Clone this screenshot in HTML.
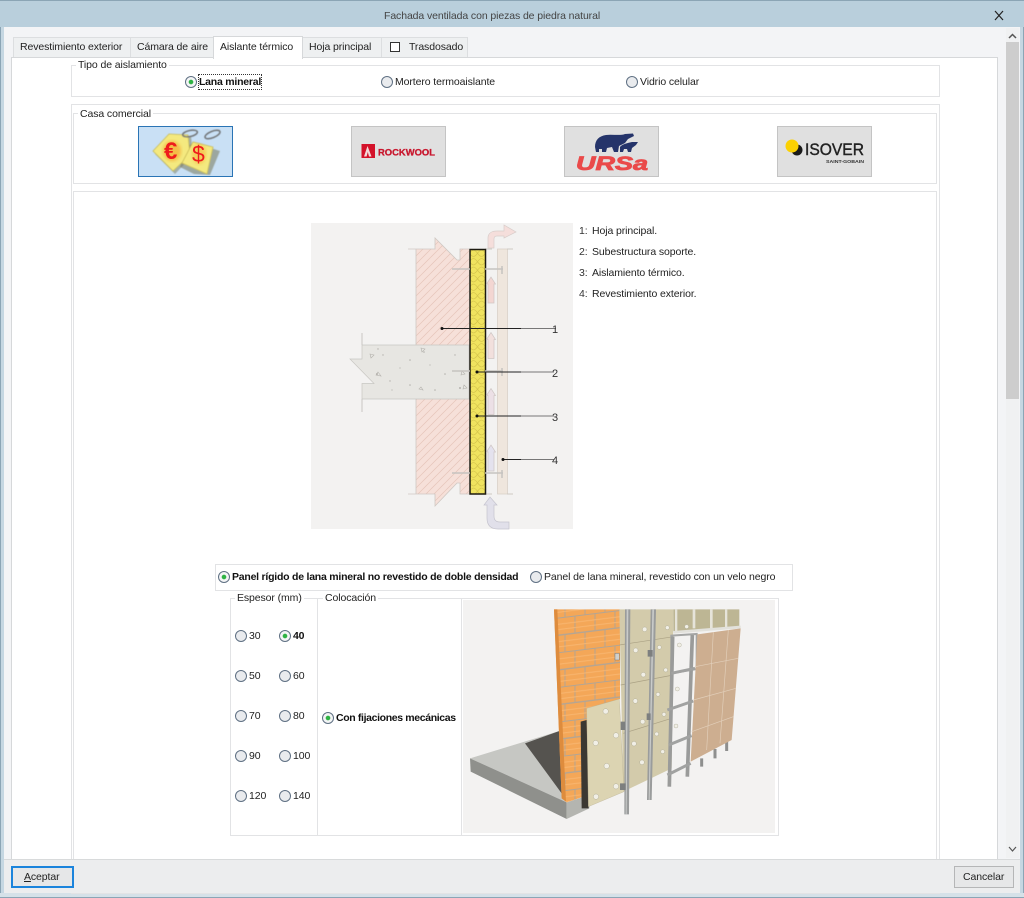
<!DOCTYPE html>
<html lang="es"><head><meta charset="utf-8"><title>Fachada ventilada con piezas de piedra natural</title>
<style>
html,body{margin:0;padding:0;background:#fff}
#w{position:relative;width:1024px;height:898px;overflow:hidden;background:#f3f4f6;font:10.5px "Liberation Sans",Arial,sans-serif;letter-spacing:-.1px;color:#222}
.a{position:absolute;box-sizing:border-box}
.t{position:absolute;white-space:nowrap;line-height:14px;height:14px}
.b{font-weight:bold;color:#111;letter-spacing:-.23px}
.g{position:absolute;box-sizing:border-box;border:1px solid #e2e3e5;background:#fff}
.r{position:absolute;box-sizing:border-box;width:12px;height:12px;border-radius:50%;border:1px solid #5f7083;background:#e9ebee}
.r.on{background:radial-gradient(circle,#2fb344 0 2px,#f4f5f6 2.6px)}
.tab{position:absolute;box-sizing:border-box;background:#eef0f1;border:1px solid #dcdee0;border-bottom:0}
svg{position:absolute;left:0;top:0}
</style></head><body><div id="w">
<div class="a" style="left:0;top:0;width:1024px;height:27px;background:#b9cfdc;border-top:1px solid #8ba5b5"></div>
<div class="a" style="left:0;top:27px;width:4px;height:871px;background:#c5d7e2;border-left:1px solid #8ba5b5"></div>
<div class="a" style="left:1020px;top:27px;width:4px;height:871px;background:#c5d7e2;border-right:1px solid #8ba5b5"></div>
<div class="a" style="left:0;top:893px;width:1024px;height:5px;background:#d5e1e8;border-bottom:1px solid #8ba5b5"></div>
<div class="t" style="left:384px;top:9px;color:#444">Fachada ventilada con piezas de piedra natural</div>

<div class="tab" style="left:13px;top:37px;width:118px;height:21px"></div>
<div class="tab" style="left:130px;top:37px;width:84px;height:21px"></div>
<div class="tab" style="left:302px;top:37px;width:80px;height:21px"></div>
<div class="tab" style="left:381px;top:37px;width:87px;height:21px"></div>
<div class="g" style="left:11px;top:57px;width:987px;height:803px;border-color:#d6d8da"></div>
<div class="a" style="left:213px;top:36px;width:90px;height:23px;background:#fff;border:1px solid #d6d8da;border-bottom:0"></div>
<div class="t" style="left:20px;top:40px">Revestimiento exterior</div>
<div class="t" style="left:137px;top:40px">Cámara de aire</div>
<div class="t" style="left:220px;top:40px">Aislante térmico</div>
<div class="t" style="left:309px;top:40px">Hoja principal</div>
<div class="a" style="left:390px;top:42px;width:10px;height:10px;border:1px solid #333;background:#fff"></div>
<div class="t" style="left:409px;top:40px">Trasdosado</div>

<div class="g" style="left:71px;top:65px;width:869px;height:32px"></div>
<div class="t" style="left:76px;top:58px;background:#fff;padding:0 2px">Tipo de aislamiento</div>
<div class="r on" style="left:185px;top:76px"></div>
<div class="t b" style="left:199px;top:75px;outline:1px dotted #333;outline-offset:0">Lana mineral</div>
<div class="r" style="left:381px;top:76px"></div><div class="t" style="left:395px;top:75px">Mortero termoaislante</div>
<div class="r" style="left:626px;top:76px"></div><div class="t" style="left:640px;top:75px">Vidrio celular</div>

<div class="g" style="left:71px;top:104px;width:869px;height:790px"></div>
<div class="g" style="left:73px;top:113px;width:864px;height:71px"></div>
<div class="t" style="left:78px;top:107px;background:#fff;padding:0 2px">Casa comercial</div>
<div class="a" style="left:138px;top:126px;width:95px;height:51px;background:#c9e0f5;border:1px solid #2a74b5"></div>
<div class="a" style="left:351px;top:126px;width:95px;height:51px;background:#e0e0e0;border:1px solid #c4c4c4"></div>
<div class="a" style="left:564px;top:126px;width:95px;height:51px;background:#e0e0e0;border:1px solid #c4c4c4"></div>
<div class="a" style="left:777px;top:126px;width:95px;height:51px;background:#e0e0e0;border:1px solid #c4c4c4"></div>

<div class="g" style="left:73px;top:191px;width:864px;height:700px"></div>
<div class="a" style="left:311px;top:223px;width:262px;height:306px;background:#f3f2f1"></div>
<div class="t" style="left:579px;top:224px;color:#333">1:</div><div class="t" style="left:592px;top:224px">Hoja principal.</div>
<div class="t" style="left:579px;top:245px;color:#333">2:</div><div class="t" style="left:592px;top:245px">Subestructura soporte.</div>
<div class="t" style="left:579px;top:266px;color:#333">3:</div><div class="t" style="left:592px;top:266px">Aislamiento térmico.</div>
<div class="t" style="left:579px;top:287px;color:#333">4:</div><div class="t" style="left:592px;top:287px">Revestimiento exterior.</div>

<div class="g" style="left:215px;top:564px;width:578px;height:27px"></div>
<div class="r on" style="left:218px;top:571px"></div><div class="t b" style="left:232px;top:570px">Panel rígido de lana mineral no revestido de doble densidad</div>
<div class="r" style="left:530px;top:571px"></div><div class="t" style="left:544px;top:570px">Panel de lana mineral, revestido con un velo negro</div>

<div class="g" style="left:230px;top:598px;width:88px;height:238px"></div>
<div class="g" style="left:317px;top:598px;width:145px;height:238px"></div>
<div class="g" style="left:461px;top:598px;width:318px;height:238px"></div>
<div class="a" style="left:463px;top:600px;width:312px;height:233px;background:#f3f2f1"></div>
<div class="t" style="left:235px;top:591px;background:#fff;padding:0 2px">Espesor (mm)</div>
<div class="t" style="left:323px;top:591px;background:#fff;padding:0 2px">Colocación</div>

<div class="r" style="left:235px;top:630px"></div><div class="t" style="left:249px;top:629px">30</div>
<div class="r on" style="left:279px;top:630px"></div><div class="t b" style="left:293px;top:629px">40</div>
<div class="r" style="left:235px;top:670px"></div><div class="t" style="left:249px;top:669px">50</div>
<div class="r" style="left:279px;top:670px"></div><div class="t" style="left:293px;top:669px">60</div>
<div class="r" style="left:235px;top:710px"></div><div class="t" style="left:249px;top:709px">70</div>
<div class="r" style="left:279px;top:710px"></div><div class="t" style="left:293px;top:709px">80</div>
<div class="r" style="left:235px;top:750px"></div><div class="t" style="left:249px;top:749px">90</div>
<div class="r" style="left:279px;top:750px"></div><div class="t" style="left:293px;top:749px">100</div>
<div class="r" style="left:235px;top:790px"></div><div class="t" style="left:249px;top:789px">120</div>
<div class="r" style="left:279px;top:790px"></div><div class="t" style="left:293px;top:789px">140</div>
<div class="r on" style="left:322px;top:712px"></div><div class="t b" style="left:336px;top:711px;letter-spacing:-.36px">Con fijaciones mecánicas</div>

<!-- scrollbar -->
<div class="a" style="left:1006px;top:28px;width:13px;height:830px;background:#f0f1f2"></div>
<div class="a" style="left:1006px;top:42px;width:13px;height:357px;background:#cdcdcd"></div>
<!-- bottom -->
<div class="a" style="left:4px;top:859px;width:1016px;height:34px;background:#ecedee;border-top:1px solid #d8dadb"></div>
<div class="a" style="left:11px;top:866px;width:63px;height:22px;background:#e6e7e8;border:2px solid #1b84dc"></div>
<div class="t" style="left:24px;top:870px"><u>A</u>ceptar</div>
<div class="a" style="left:954px;top:866px;width:60px;height:22px;background:#e6e7e8;border:1px solid #b5b6b7"></div>
<div class="t" style="left:963px;top:870px">Cancelar</div>

<svg width="1024" height="898" viewBox="0 0 1024 898" style="letter-spacing:0">
<defs>
<pattern id="h" width="8" height="8" patternUnits="userSpaceOnUse"><rect width="8" height="8" fill="#f6e0d9"/><path d="M-1 9L9-1M-1 1L1-1M7 9L9 7" stroke="#e5c4b9" stroke-width=".7"/></pattern>
<pattern id="i" width="16" height="8.500" patternUnits="userSpaceOnUse" x="469.500" y="249"><rect width="16" height="8.500" fill="#f0e35f"/><path d="M0 4.250C3 0 5 0 8 4.250C11 8.500 13 8.500 16 4.250M0 4.250C3 8.500 5 8.500 8 4.250C11 0 13 0 16 4.250" fill="none" stroke="#d6c54c" stroke-width=".7"/></pattern>
<pattern id="br" width="120" height="104" patternUnits="userSpaceOnUse" patternTransform="skewY(-7)"><rect width="120" height="104" fill="#f4a758"/><path d="M0 1H120M0 53H120" stroke="#b3a594" stroke-width="4"/><path d="M45 0V52M105 0V52M15 52V104M75 52V104" stroke="#b3a594" stroke-width="3"/><path d="M0 20H120M0 36H120M0 72H120M0 88H120" stroke="#f8b670" stroke-width="3"/></pattern>
<filter id="bl"><feGaussianBlur stdDeviation=".4"/></filter>
<filter id="bl2"><feGaussianBlur stdDeviation="1.600"/></filter>
</defs>
<!-- close -->
<path d="M995 11L1003 20M1003 11L995 20" stroke="#222" stroke-width="1.200"/>
<path d="M1009 38L1012.500 34.500L1016 38" fill="none" stroke="#555" stroke-width="1.500"/>
<path d="M1009 847L1012.500 851L1016 847" fill="none" stroke="#555" stroke-width="1.200"/>

<!-- tags -->
<g filter="url(#bl)">
<path d="M186 146L195 143L220 151L210 175L194 174L180 167Z" fill="#77765a" opacity=".55"/>
<path d="M155 154L172 137L191 136L193 155L175 174Z" fill="#7d7c59" opacity=".5"/>
<path d="M153 151L169 134L188 135L190 155L173 171Z" fill="#f4e97f" stroke="#c6b954" stroke-width=".8"/>
<path d="M182 163L193 142L213 147L207 174Z" fill="#f4e97f" stroke="#c6b954" stroke-width=".8"/>
<ellipse cx="190" cy="133.500" rx="7.500" ry="3" transform="rotate(-12 190 133.500)" fill="none" stroke="#6f7274" stroke-width="1.500"/>
<ellipse cx="212.500" cy="134.500" rx="8" ry="3.200" transform="rotate(-22 212.500 134.500)" fill="none" stroke="#6f7274" stroke-width="1.500"/>
</g>
<ellipse cx="172" cy="151" rx="9" ry="10" fill="#f4a020" opacity=".6" filter="url(#bl2)"/>
<ellipse cx="199" cy="154" rx="7" ry="10" fill="#f4b030" opacity=".5" filter="url(#bl2)"/>
<text x="164" y="159" font-family="Liberation Sans" font-size="24" font-weight="bold" fill="#ee1c1c">€</text>
<text x="192" y="162" font-family="Liberation Sans" font-size="23" fill="#ee1c1c">$</text>

<!-- rockwool -->
<rect x="361.500" y="144" width="13.500" height="14" fill="#d4122a"/>
<path d="M364 156.500L367.500 146L371.500 156.500L369 156.500L367.800 152L366.600 156.500Z" fill="#f3d9d9"/>
<text x="378" y="155.500" font-family="Liberation Sans" font-size="9.500" font-weight="bold" fill="#c8172e" textLength="57" lengthAdjust="spacingAndGlyphs" stroke="#c8172e" stroke-width=".3">ROCKWOOL</text>

<!-- ursa -->
<path d="M596 152L595 147C595 140 599 136 606 135C612 134 620 136 625 134L633 133.500L634 136L628 139L625 143L619 146L618 152L614 152L612 147L607 148L606 152L602 152L602 149L599 149L599 152Z" fill="#25346a"/>
<path d="M620 152L620 147C622 144 628 143 632 142L638 142L636 145L632 148L631 152L628 152L627 149L624 149L623 152Z" fill="#25346a"/>
<text x="576" y="170" font-family="Liberation Sans" font-size="19" font-weight="bold" font-style="italic" fill="#ea4a4a" textLength="72" lengthAdjust="spacingAndGlyphs" stroke="#ea4a4a" stroke-width=".8">URSa</text>

<!-- isover -->
<circle cx="797" cy="150" r="5.500" fill="#1a1a1a"/>
<circle cx="792" cy="146" r="6.500" fill="#fbd103"/>
<text x="805" y="155" font-family="Liberation Sans" font-size="16.500" fill="#222" textLength="59" lengthAdjust="spacingAndGlyphs" stroke="#222" stroke-width=".4">ISOVER</text>
<text x="826" y="163" font-family="Liberation Sans" font-size="4.500" font-weight="bold" fill="#333" textLength="38" lengthAdjust="spacingAndGlyphs">SAINT-GOBAIN</text>

<!-- section drawing -->
<g>
<path d="M416 249H435L435 238L457 260H460V249H469V345H416Z" fill="url(#h)"/>
<path d="M416 399H469V494H460V483H457L435 506V494H416Z" fill="url(#h)"/>
<path d="M408 249H435L435 238L457 260H460V249H469M408 494H435V506L457 483H460V494H469M416 249V345M416 399V494" fill="none" stroke="#cfc8c3" stroke-width=".8"/>
<path d="M362 345H469V399H362V383.500H374L350 359H362Z" fill="#e7e6e2" stroke="#c8c6c2" stroke-width=".7"/>
<path d="M362 333V345M362 399V412" stroke="#c8c6c2"/>
<g fill="#b4b2ad"><circle cx="378" cy="349" r=".7"/><circle cx="410" cy="360" r=".8"/><circle cx="377" cy="374" r="1"/><circle cx="390" cy="381" r=".7"/><circle cx="424" cy="352" r=".8"/><circle cx="445" cy="374" r=".8"/><circle cx="410" cy="385" r=".8"/><circle cx="435" cy="390" r=".8"/><circle cx="460" cy="388" r="1"/><circle cx="400" cy="368" r=".6"/><circle cx="430" cy="365" r=".6"/><circle cx="455" cy="355" r=".7"/><circle cx="383" cy="355" r=".7"/><circle cx="392" cy="390" r=".6"/></g>
<path d="M421 348L425 349L422 352ZM370 354L374 355L371 358ZM378 372L381 376L376 375ZM462 371L465 374L461 375ZM464 385L467 388L463 389ZM421 387L423 390L419 389Z" fill="none" stroke="#b4b2ad" stroke-width=".6"/>
<rect x="497.500" y="249" width="10" height="245" fill="#efe6dd" stroke="#d6cdc4" stroke-width=".7"/>
<path d="M485 249H492M507 249H513M485 494H492M507 494H513" stroke="#cfc9c4"/>
<rect x="470" y="249.500" width="15.500" height="244.500" fill="url(#i)" stroke="#1c1a10" stroke-width="1.500"/>
<g stroke="#c6c3c0" stroke-width="1.500" fill="none"><path d="M452 269H470M485 269H503M452 371H470M485 371H503M452 473H470M485 473H503"/><path d="M502 266V274M502 368V376M502 470V478"/></g>
<g stroke="#cfc6c4" stroke-width=".7"><path d="M488 303V284H486.500L491 277L495.500 284H494V303Z" fill="#f3d6d2"/><path d="M488 358.500V339.500H486.500L491 332.500L495.500 339.500H494V358.500Z" fill="#f2e0dd"/><path d="M488 414.500V395.500H486.500L491 388.500L495.500 395.500H494V414.500Z" fill="#ece0e6"/><path d="M488 471V452H486.500L491 445L495.500 452H494V471Z" fill="#e4e2ee"/></g>
<path d="M488 248V238C488 233 492 231 497 231H504V225L516 232L504 238V236H497C495 236 494 237 494 239V248Z" fill="#f5dedb" stroke="#d8cdca" stroke-width=".7"/>
<path d="M490 497L497 505H494V516C494 520 496 522 500 522H509V529H498C491 529 487 526 487 518V505H484Z" fill="#e1e0ea" stroke="#c5c4ce" stroke-width=".7"/>
<path d="M442 328.500H521M477 372H521M477 416H521M503 459.500H521" stroke="#222" stroke-width="1"/>
<path d="M521 328.500H556M521 372H554M521 416H554M521 459.500H554" stroke="#777" stroke-width="1"/>
<g fill="#111"><circle cx="442" cy="328.500" r="1.500"/><circle cx="477" cy="372" r="1.500"/><circle cx="477" cy="416" r="1.500"/><circle cx="503" cy="459.500" r="1.500"/></g>
<g font-family="Liberation Sans" font-size="11" fill="#333"><text x="552" y="333">1</text><text x="552" y="377">2</text><text x="552" y="421">3</text><text x="552" y="464">4</text></g>
</g>

<!-- facade -->
<g transform="translate(460,595) scale(.33333)" filter="url(#bl)">
<path d="M30 490L298 408L305 610L320 622Z" fill="#c6c7c3"/>
<path d="M195 445L298 408L305 595Z" fill="#55524f"/>
<path d="M30 490L320 622V672L32 530Z" fill="#8f908c"/>
<path d="M320 622L388 600V640L320 672Z" fill="#b4b5b0"/>
<path d="M282 43H480V312L380 340L385 600L320 622L305 610Z" fill="url(#br)"/>
<path d="M282 43H292L318 620L305 610Z" fill="#de8c3d"/>
<path d="M362 380L380 375L386 640L365 640Z" fill="#3a3733"/>
<path d="M478 43H640L635 520L490 590Z" fill="#d3cbab"/>
<path d="M640 43H838V100L640 110Z" fill="#bdb694"/>
<path d="M478 150L640 125M490 415L635 370M482 270L640 240" stroke="#aaa184" stroke-width="2"/>
<path d="M380 340L478 312L492 590L385 635Z" fill="#dcd4b2" stroke="#b4aa8a"/>
<g fill="#f1efe6" stroke="#9c9880" stroke-width="1"><circle cx="437" cy="349" r="8"/><circle cx="468" cy="421" r="8"/><circle cx="407" cy="444" r="8"/><circle cx="440" cy="513" r="8"/><circle cx="468" cy="574" r="8"/><circle cx="408" cy="605" r="8"/><circle cx="554" cy="103" r="7"/><circle cx="622" cy="98" r="6"/><circle cx="527" cy="166" r="7"/><circle cx="598" cy="157" r="6"/><circle cx="550" cy="239" r="7"/><circle cx="617" cy="225" r="6"/><circle cx="526" cy="318" r="7"/><circle cx="594" cy="298" r="6"/><circle cx="548" cy="380" r="7"/><circle cx="612" cy="358" r="6"/><circle cx="522" cy="446" r="7"/><circle cx="590" cy="417" r="6"/><circle cx="546" cy="502" r="7"/><circle cx="608" cy="470" r="6"/><circle cx="680" cy="95" r="6"/><circle cx="658" cy="150" r="6"/><circle cx="652" cy="282" r="6"/><circle cx="648" cy="393" r="6"/></g>
<g fill="#9a9c9c"><path d="M495 43H511L507 658H493Z"/><path d="M572 43H588L575 615H561Z"/></g>
<path d="M500 43H505L500 658H497ZM577 43H582L569 615H566Z" fill="#c9cbca"/>
<path d="M482 380H495V405H482ZM480 565H497V585H480ZM560 355H572V375H560ZM563 165H578V185H563Z" fill="#7d7f7f"/>
<path d="M645 43H652V110H645ZM698 43H706V100H698ZM750 43H758V100H750ZM795 43H802V100H795Z" fill="#e6e4da"/>
<path d="M640 108L842 92V100L640 116Z" fill="#e2e1db"/>
<path d="M634 122L710 117V222L634 235Z" fill="none" stroke="#a5a6a5" stroke-width="6"/>
<path d="M638 125L628 575M697 120L682 545" stroke="#9a9b9a" stroke-width="11"/>
<path d="M622 345L700 318M626 450L695 422M622 540L692 505M634 235L705 220" stroke="#a1a2a1" stroke-width="9"/>
<path d="M725 490V515M765 462V490M800 440V468" stroke="#8e8f8e" stroke-width="9"/>
<path d="M712 118L842 100L815 435L692 500Z" fill="#cdae90"/>
<path d="M760 112L740 465M805 105L780 445M705 215L835 190M700 315L828 280M695 410L820 365" stroke="#e2cfba" stroke-width="2"/>
<path d="M465 175H478V195H465Z" fill="#d0d0cc" stroke="#555"/>
</g>
</svg>
</div></body></html>
